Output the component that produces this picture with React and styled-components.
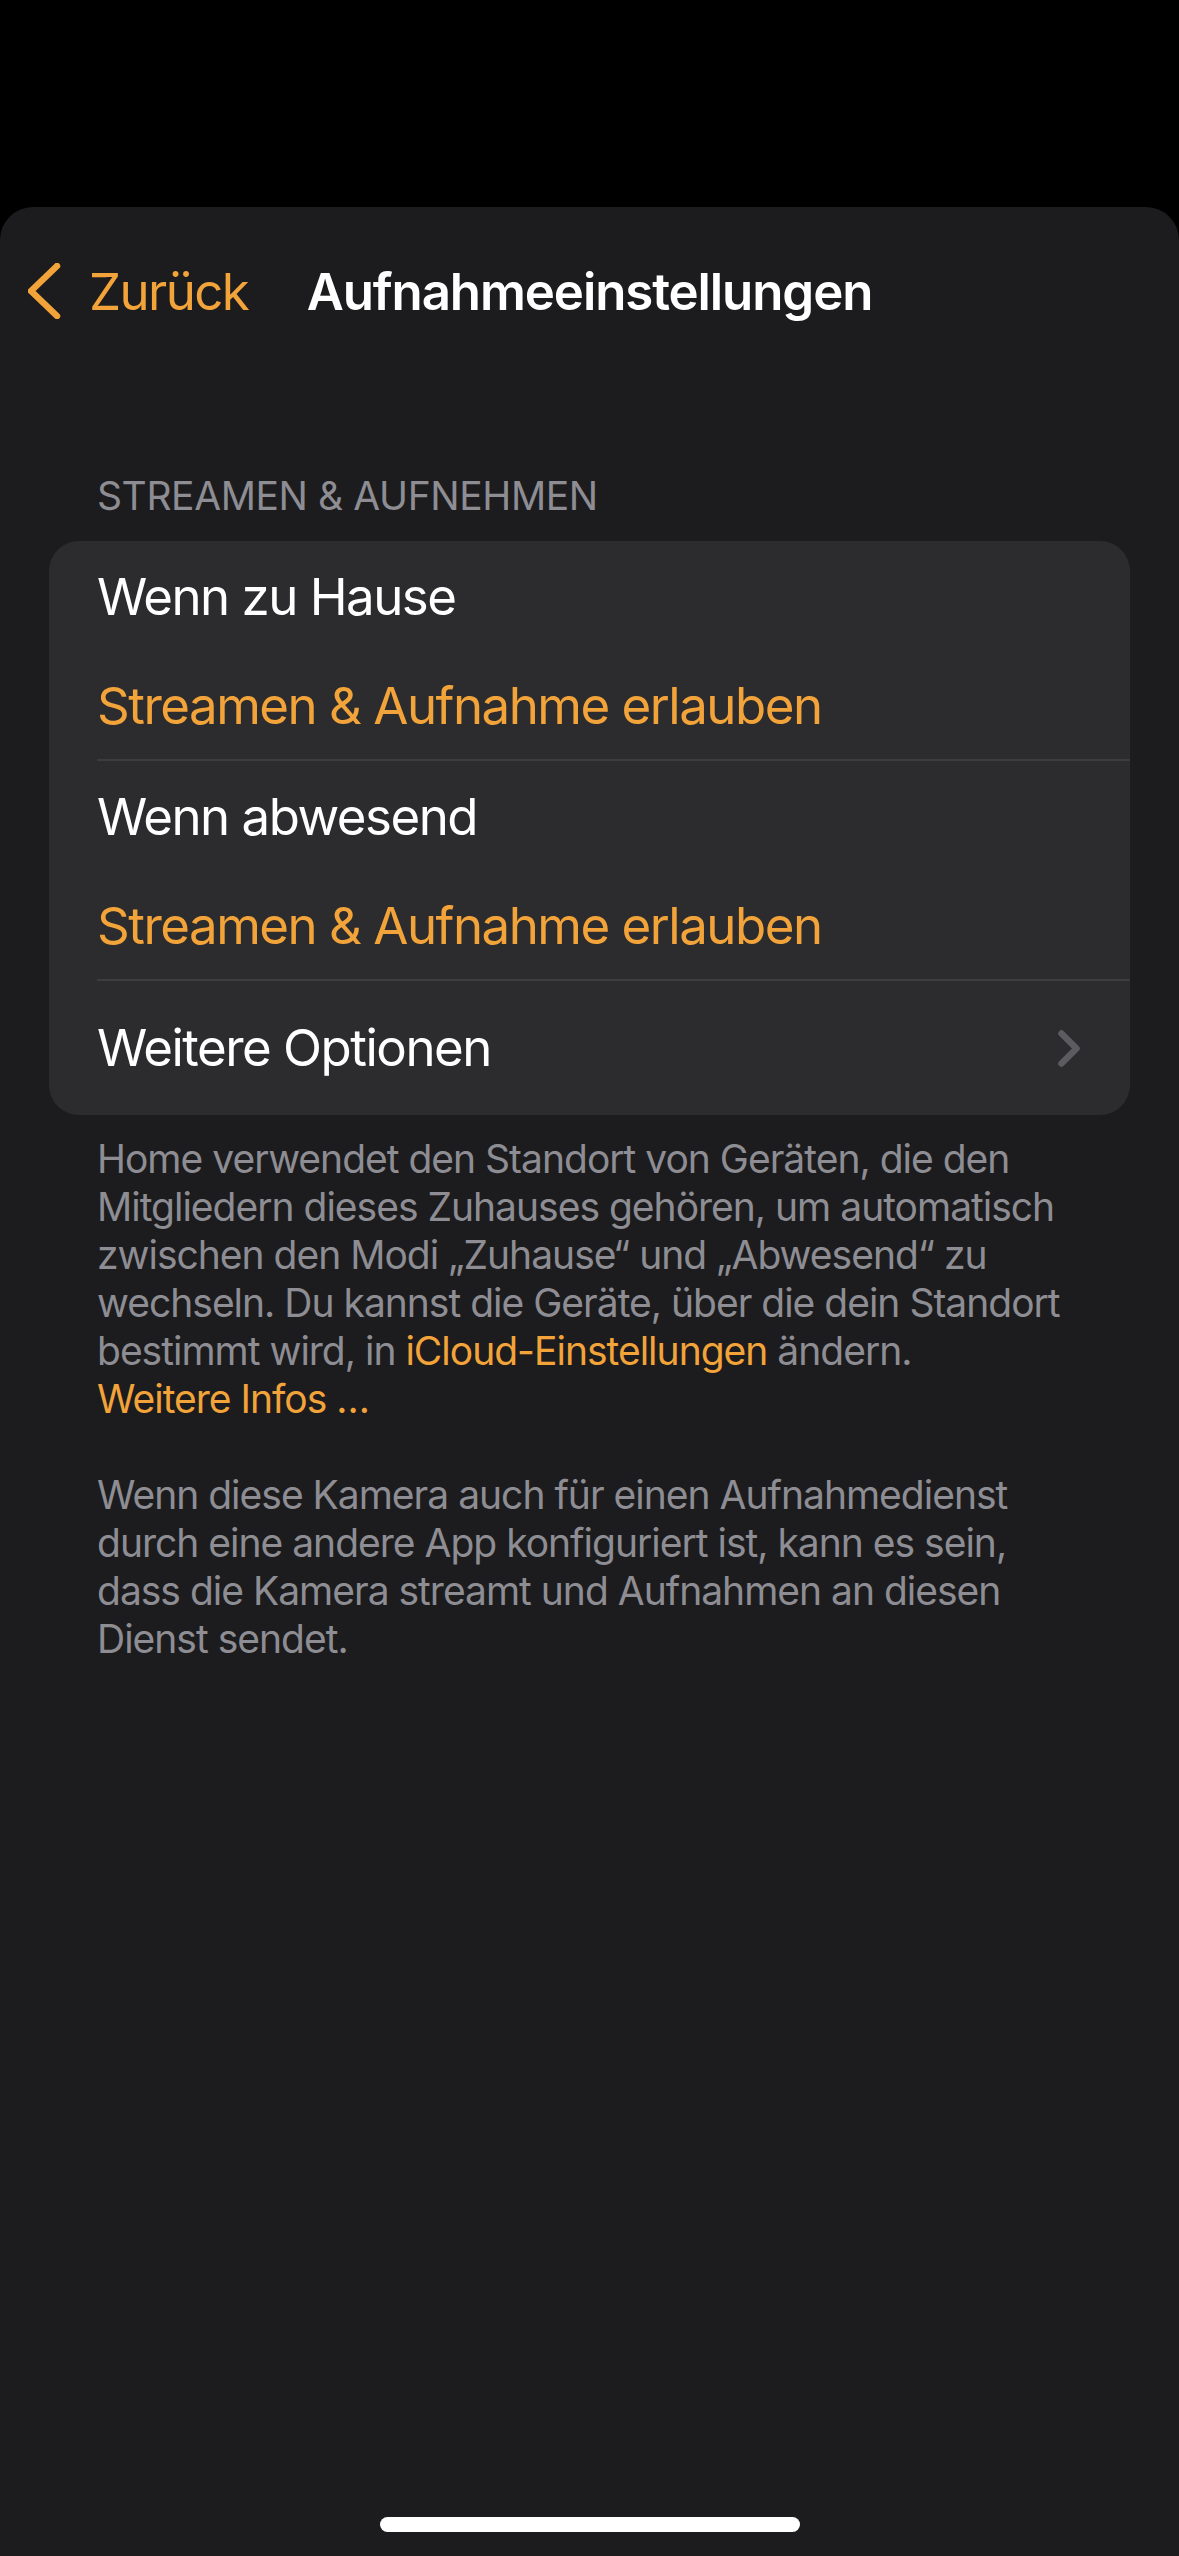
import React from "react";
import styled, { createGlobalStyle } from "styled-components";

const orange = "#f2a33a";

const GlobalStyle = createGlobalStyle`
  html, body {
    margin: 0;
    padding: 0;
    background: #000;
  }
  body {
    font-family: Inter, "Noto Sans", "Liberation Sans", sans-serif;
    -webkit-font-smoothing: antialiased;
  }
`;

const Screen = styled.div`
  height: 2556px;
  background: #000;
  padding-top: 207px;
  box-sizing: border-box;
  display: flex;
  flex-direction: column;
`;

const Sheet = styled.div`
  flex: 1;
  background: #1c1c1e;
  border-radius: 33px 33px 0 0;
  display: flex;
  flex-direction: column;
`;

const NavBar = styled.div`
  height: 168px;
  display: grid;
  grid-template-columns: 1fr auto 1fr;
  align-items: center;
  padding: 0 28px;
`;

const BackButton = styled.button`
  justify-self: start;
  display: flex;
  align-items: center;
  gap: 27px;
  background: none;
  border: 0;
  padding: 0;
  color: ${orange};
  font-family: inherit;
  font-size: 51px;
  letter-spacing: -1.6px;
  cursor: pointer;
`;

const Title = styled.h1`
  margin: 0;
  color: #fff;
  font-size: 51px;
  font-weight: 600;
  letter-spacing: -1.1px;
`;

const Content = styled.div`
  padding: 0 49px;
`;

const SectionHeader = styled.div`
  margin: 97px 0 21px;
  padding: 0 48px;
  color: #8d8d93;
  font-size: 39px;
  line-height: 48px;
  letter-spacing: -0.4px;
`;

const Card = styled.div`
  background: #2c2c2e;
  border-radius: 30px;
  padding-left: 48px;
  overflow: hidden;
`;

const Row = styled.div`
  display: flex;
  justify-content: space-between;
  padding: ${(p) => (p.$stacked ? "30px 50px 27px 0" : "0 50px 0 0")};
  min-height: ${(p) => (p.$stacked ? "auto" : "134px")};
  box-sizing: border-box;
  border-bottom: ${(p) => (p.$last ? "none" : "2px solid #3d3d40")};
  flex-direction: ${(p) => (p.$stacked ? "column" : "row")};
  align-items: ${(p) => (p.$stacked ? "flex-start" : "center")};
  gap: ${(p) => (p.$stacked ? "57px" : "0")};
`;

const RowLabel = styled.div`
  color: ${(p) => (p.$accent ? orange : "#fff")};
  font-size: 51px;
  line-height: 52px;
  letter-spacing: -1.5px;
`;

const Footer = styled.div`
  margin-top: 20px;
  padding: 0 48px;
  color: #8d8d93;
  font-size: 39px;
  line-height: 48px;
  letter-spacing: -1px;
  white-space: nowrap;
`;

const FooterParagraph = styled.p`
  margin: 0 0 48px;
`;

const Link = styled.span`
  color: ${orange};
`;

const Spacer = styled.div`
  flex: 1;
`;

const HomeIndicator = styled.div`
  width: 420px;
  height: 15px;
  border-radius: 8px;
  background: #fff;
  margin: 0 auto 24px;
`;

const BackChevron = () => (
  <svg width="34" height="56" viewBox="0 0 34 56" fill="none">
    <path
      d="M29 3 L3 28 L29 53"
      stroke={orange}
      strokeWidth="6.5"
      strokeLinecap="round"
      strokeLinejoin="round"
    />
  </svg>
);

const Disclosure = () => (
  <svg width="22" height="37" viewBox="0 0 22 37" fill="none">
    <path
      d="M3.5 3.5 L18.5 18.5 L3.5 33.5"
      stroke="#5c5c60"
      strokeWidth="6.5"
      strokeLinecap="round"
      strokeLinejoin="round"
    />
  </svg>
);

export default function App() {
  return (
    <>
      <GlobalStyle />
      <Screen>
        <Sheet>
          <NavBar>
            <BackButton>
              <BackChevron />
              Zurück
            </BackButton>
            <Title>Aufnahmeeinstellungen</Title>
            <span />
          </NavBar>
          <Content>
            <SectionHeader>STREAMEN &amp; AUFNEHMEN</SectionHeader>
            <Card>
              <Row $stacked>
                <RowLabel>Wenn zu Hause</RowLabel>
                <RowLabel $accent>Streamen &amp; Aufnahme erlauben</RowLabel>
              </Row>
              <Row $stacked>
                <RowLabel>Wenn abwesend</RowLabel>
                <RowLabel $accent>Streamen &amp; Aufnahme erlauben</RowLabel>
              </Row>
              <Row $last>
                <RowLabel>Weitere Optionen</RowLabel>
                <Disclosure />
              </Row>
            </Card>
            <Footer>
              <FooterParagraph>
                Home verwendet den Standort von Geräten, die den
                <br />
                Mitgliedern dieses Zuhauses gehören, um automatisch
                <br />
                zwischen den Modi „Zuhause“ und „Abwesend“ zu
                <br />
                wechseln. Du kannst die Geräte, über die dein Standort
                <br />
                bestimmt wird, in <Link>iCloud-Einstellungen</Link> ändern.
                <br />
                <Link>Weitere Infos …</Link>
              </FooterParagraph>
              <FooterParagraph>
                Wenn diese Kamera auch für einen Aufnahmedienst
                <br />
                durch eine andere App konfiguriert ist, kann es sein,
                <br />
                dass die Kamera streamt und Aufnahmen an diesen
                <br />
                Dienst sendet.
              </FooterParagraph>
            </Footer>
          </Content>
          <Spacer />
          <HomeIndicator />
        </Sheet>
      </Screen>
    </>
  );
}
